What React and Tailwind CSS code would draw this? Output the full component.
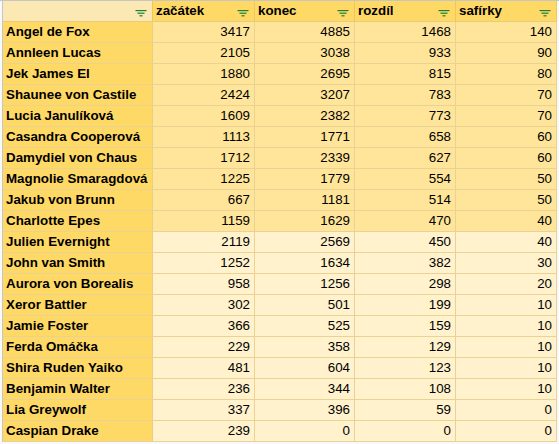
import React from "react";

const rows = [
  ["Angel de Fox", 3417, 4885, 1468, 140],
  ["Annleen Lucas", 2105, 3038, 933, 90],
  ["Jek James El", 1880, 2695, 815, 80],
  ["Shaunee von Castile", 2424, 3207, 783, 70],
  ["Lucia Janulíková", 1609, 2382, 773, 70],
  ["Casandra Cooperová", 1113, 1771, 658, 60],
  ["Damydiel von Chaus", 1712, 2339, 627, 60],
  ["Magnolie Smaragdová", 1225, 1779, 554, 50],
  ["Jakub von Brunn", 667, 1181, 514, 50],
  ["Charlotte Epes", 1159, 1629, 470, 40],
  ["Julien Evernight", 2119, 2569, 450, 40],
  ["John van Smith", 1252, 1634, 382, 30],
  ["Aurora von Borealis", 958, 1256, 298, 20],
  ["Xeror Battler", 302, 501, 199, 10],
  ["Jamie Foster", 366, 525, 159, 10],
  ["Ferda Omáčka", 229, 358, 129, 10],
  ["Shira Ruden Yaiko", 481, 604, 123, 10],
  ["Benjamin Walter", 236, 344, 108, 10],
  ["Lia Greywolf", 337, 396, 59, 0],
  ["Caspian Drake", 239, 0, 0, 0],
];

const widths = ["w-[102px]", "w-[100px]", "w-[101px]", "w-[101px]"];

function FilterIcon() {
  return (
    <svg width="12" height="7" viewBox="0 0 12 7" className="shrink-0 mt-[5px]">
      <rect x="0.5" y="0" width="11" height="1.2" fill="#188038" />
      <rect x="2.5" y="2.6" width="7" height="1.2" fill="#188038" />
      <rect x="4.5" y="5.2" width="3" height="1.2" fill="#188038" />
    </svg>
  );
}

export default function App() {
  const headers = ["začátek", "konec", "rozdíl", "safírky"];
  return (
    <div className="w-[559px] h-[444px] overflow-hidden bg-[#f8f9fa] font-['Liberation_Sans',Arial,sans-serif] text-[13.33px] text-black leading-none">
      <div className="border-t border-[#c4c7c5] pl-[2px]">
        <div className="border-l border-[#c4c7c5] w-[555px]">
          <div className="flex h-[21px] border-b border-[#e6cc80]">
            <div className="w-[150px] bg-[#fce8b2] border-r border-[#efc75a] flex items-center justify-end pr-[5px]">
              <FilterIcon />
            </div>
            {headers.map((h, i) => (
              <div
                key={h}
                className={`${widths[i]} bg-[#ffd966] border-r border-[#efc75a] flex items-center justify-between pl-[3px] pr-[5px] font-bold`}
              >
                <span>{h}</span>
                <FilterIcon />
              </div>
            ))}
          </div>
          {rows.map((r, idx) => {
            const bg = idx < 10 ? "bg-[#ffe599]" : "bg-[#fff2cc]";
            return (
              <div key={r[0]} className="flex h-[21px] border-b border-[#e9d293]">
                <div className="w-[150px] bg-[#ffd966] border-r border-[#e9cf86] flex items-center pl-[3px] font-bold">
                  {r[0]}
                </div>
                {r.slice(1).map((v, i) => (
                  <div
                    key={i}
                    className={`${widths[i]} ${bg} border-r border-[#e9d293] flex items-center justify-end pr-[4px]`}
                  >
                    {v}
                  </div>
                ))}
              </div>
            );
          })}
        </div>
      </div>
    </div>
  );
}
